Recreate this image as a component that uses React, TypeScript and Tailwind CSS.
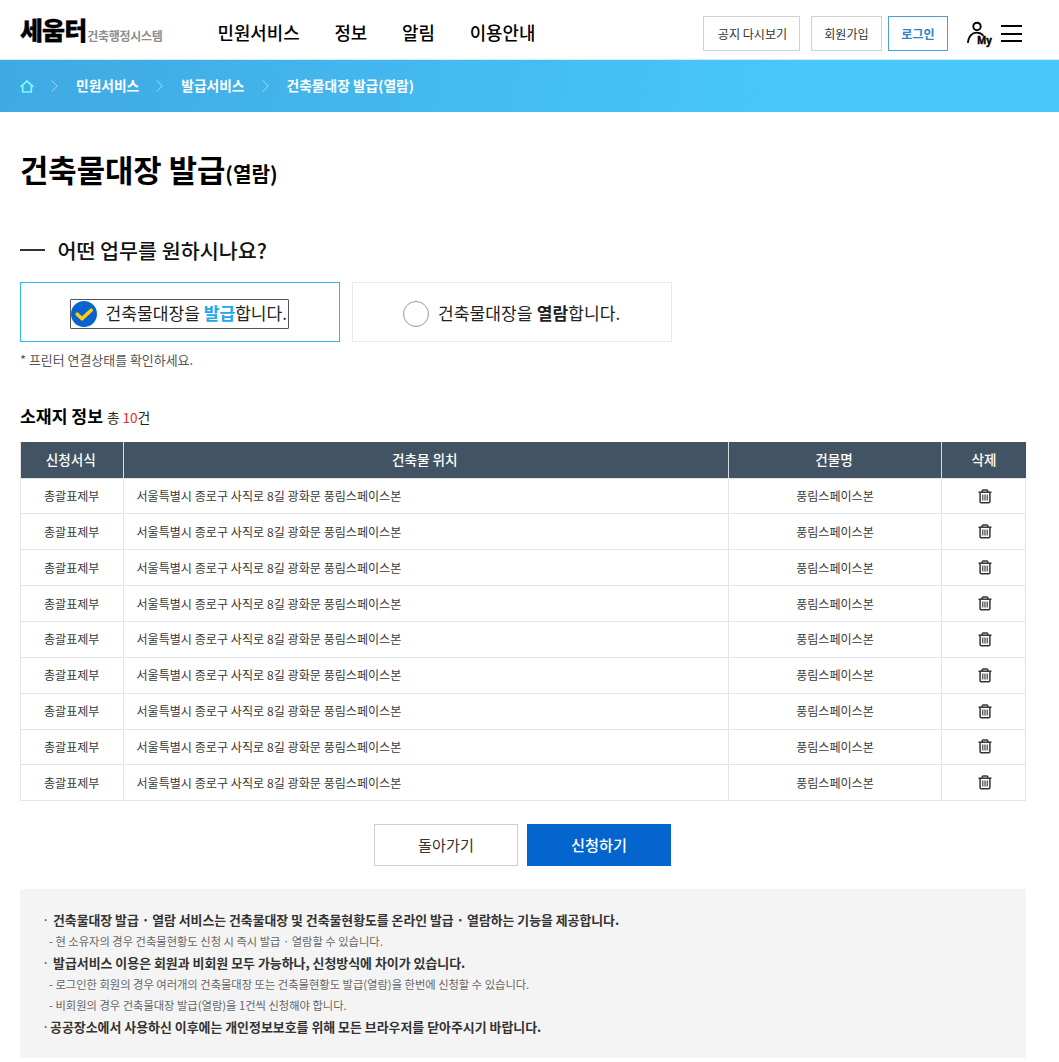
import { Fragment } from 'react';

const menus = ['민원서비스', '정보', '알림', '이용안내'];
const crumbs = ['민원서비스', '발급서비스', '건축물대장 발급(열람)'];

interface Building {
  id: number;
  form: string;
  address: string;
  name: string;
}

const buildings: Building[] = Array.from({ length: 9 }, (_, i) => ({
  id: i + 1,
  form: '총괄표제부',
  address: '서울특별시 종로구 사직로 8길 광화문 풍림스페이스본',
  name: '풍림스페이스본',
}));

function MyIcon() {
  return (
    <svg width="28" height="28" viewBox="0 0 28 28" fill="none" stroke="#000" strokeWidth="1.9">
      <circle cx="11" cy="5.4" r="3.7" />
      <path d="M1.8 21.8C2.3 15.5 6 11.6 10.6 11.6C13.6 11.6 15.9 12.8 17.4 14.6" />
      <text
        x="11"
        y="23.2"
        fontSize="10.5"
        fontWeight="700"
        fill="#000"
        strokeWidth="0.4"
        textLength="15"
        lengthAdjust="spacingAndGlyphs"
        className="font-['Open_Sans',sans-serif]"
      >
        My
      </text>
    </svg>
  );
}

function TrashIcon() {
  return (
    <svg width="14" height="15" viewBox="0 0 14 15" fill="none" stroke="#333" strokeWidth="1.5">
      <path d="M0.5 3.2H13.5" />
      <path d="M4.2 3V1.9Q4.2 0.9 5.2 0.9H8.8Q9.8 0.9 9.8 1.9V3" />
      <path d="M2.1 3.5V12.6Q2.1 13.8 3.3 13.8H10.7Q11.9 13.8 11.9 12.6V3.5" />
      <path d="M4.8 5.5V11.4M7 5.5V11.4M9.2 5.5V11.4" strokeWidth="1.1" />
    </svg>
  );
}

function Header() {
  return (
    <header className="flex h-[60px] items-start border-b border-[#d5ecf7] pl-5">
      <a className="mt-[13px] flex h-[32px] w-[197.5px] shrink-0 items-end whitespace-nowrap">
        <span className="text-[25px] leading-[32px] font-black tracking-[-0.9px] text-black [-webkit-text-stroke:0.3px_#000]">세움터</span>
        <span className="mb-[-1px] ml-[1px] text-[12px] leading-[20px] font-bold tracking-[-0.3px] text-[#8e8e8e]">건축행정시스템</span>
      </a>
      <nav className="mt-[18px] flex gap-[34.8px] text-[17.85px] leading-7 font-medium text-black">
        {menus.map((menu) => (
          <a key={menu}>{menu}</a>
        ))}
      </nav>
      <div className="mt-4 mr-[37px] ml-auto flex text-[12.1px] text-[#333]">
        <button className="h-[35px] w-[97px] border border-[#d2d2d2] pt-[2px] pl-[2px]">공지 다시보기</button>
        <button className="ml-[11px] h-[35px] w-[71px] border border-[#d2d2d2] pt-[2px]">회원가입</button>
        <button className="ml-[6px] h-[35px] w-[60px] border border-[#4a9fd8] pt-[2px] font-bold text-[#2d83c8]">로그인</button>
        <span className="mt-[5px] ml-[18px]">
          <MyIcon />
        </span>
        <span className="mt-[9px] ml-[7px] flex h-[17px] w-[21px] flex-col justify-between">
          <i className="h-[2px] bg-black" />
          <i className="h-[2px] bg-black" />
          <i className="h-[2px] bg-black" />
        </span>
      </div>
    </header>
  );
}

function Breadcrumb() {
  return (
    <div className="flex h-[52px] items-center bg-linear-[100deg,#3fa9e2,#48c7fa_75%] pl-5 text-[13.75px] font-bold text-white">
      <svg width="14" height="13" viewBox="0 0 14 13" fill="none" stroke="#7dfcff" strokeWidth="1.7">
        <path d="M0.6 6.8L7 1L13.4 6.8M2.7 5.8V12H11.3V5.8" />
      </svg>
      {crumbs.map((crumb) => (
        <Fragment key={crumb}>
          <svg className="mr-[18px] ml-[17px]" width="7" height="12" viewBox="0 0 7 12" fill="none" stroke="#a5dcf6">
            <path d="M0.6 0.5L6.3 6L0.6 11.5" />
          </svg>
          <span className="-mt-[2px]">{crumb}</span>
        </Fragment>
      ))}
    </div>
  );
}

function ServiceChoice() {
  return (
    <div className="mt-[15px] flex gap-3 text-[17.1px] text-[#222]">
      <label className="flex h-[60px] w-[320px] items-center border border-[#35b5ea] pt-[4px] pl-[49px]">
        <span className="flex h-[30px] w-[219px] items-center rounded-[1px] border border-[#555] whitespace-nowrap">
          <svg className="mr-[8.5px] shrink-0" width="26" height="26" viewBox="0 0 26 26">
            <circle cx="13" cy="13" r="13" fill="#0764cf" />
            <path
              d="M6.2 13.2L11 17.8L20.2 9.2"
              fill="none"
              stroke="#ffcc12"
              strokeWidth="3.6"
              strokeLinecap="round"
              strokeLinejoin="round"
            />
          </svg>
          <span className="-mt-[2px]">
            건축물대장을 <b className="text-[#19a7ee]">발급</b>합니다.
          </span>
        </span>
      </label>
      <label className="flex h-[60px] w-[320px] items-center border border-[#e8e8e8] pt-[4px] pl-[50px]">
        <span className="mr-[9px] size-[26px] rounded-full border border-[#9a9a9a]" />
        <span className="-mt-[2px] [word-spacing:0.6px]">
          건축물대장을 <b>열람</b>합니다.
        </span>
      </label>
    </div>
  );
}

function BuildingTable() {
  return (
    <table className="mt-[10px] w-[1006px] table-fixed border-separate border-spacing-0 border-l border-[#e5e5e5] text-[12.05px] text-[#3a3a3a]">
      <colgroup>
        <col className="w-[102.5px]" />
        <col className="w-[605.5px]" />
        <col className="w-[213px]" />
        <col className="w-[84px]" />
      </colgroup>
      <thead>
        <tr className="h-[36.6px] bg-[#425363] text-[13.6px] text-white">
          <th className="border-r border-b border-[#d8dcdf] border-b-[#e5e5e5] p-0 pr-[2px] pb-[2px] font-medium">신청서식</th>
          <th className="border-r border-b border-[#d8dcdf] border-b-[#e5e5e5] p-0 pr-[2px] pb-[2px] font-medium">건축물 위치</th>
          <th className="border-r border-b border-[#d8dcdf] border-b-[#e5e5e5] p-0 pr-[2px] pb-[2px] font-medium">건물명</th>
          <th className="border-b border-[#e5e5e5] p-0 pb-[2px] font-medium">삭제</th>
        </tr>
      </thead>
      <tbody>
        {buildings.map((building) => (
          <tr key={building.id} className="h-[35.85px]">
            <td className="border-r border-b border-[#e5e5e5] p-0 text-center">{building.form}</td>
            <td className="border-r border-b border-[#e5e5e5] p-0 pl-[13px] [word-spacing:0.15px]">{building.address}</td>
            <td className="border-r border-b border-[#e5e5e5] p-0 text-center">{building.name}</td>
            <td className="border-r border-b border-[#e5e5e5] p-0">
              <div className="flex justify-center pl-[2px]">
                <TrashIcon />
              </div>
            </td>
          </tr>
        ))}
      </tbody>
    </table>
  );
}

function Notice() {
  return (
    <div className="mt-[23px] h-[169px] w-[1006px] bg-[#f4f4f4] pt-[19px] pl-[22px] whitespace-nowrap text-[#333]">
      <p className="flex h-[22px] items-center text-[12.87px] font-bold">
        <span className="w-[11px] font-normal">·</span>건축물대장 발급 · 열람 서비스는 건축물대장 및 건축물현황도를 온라인 발급 · 열람하는 기능을 제공합니다.
      </p>
      <p className="flex h-[22px] items-center pl-[7px] text-[11.27px] text-[#666]">
        - 현 소유자의 경우 건축물현황도 신청 시 즉시 발급 · 열람할 수 있습니다.
      </p>
      <p className="flex h-[22px] items-center text-[12.93px] font-bold">
        <span className="w-[11px] font-normal">·</span>발급서비스 이용은 회원과 비회원 모두 가능하나, 신청방식에 차이가 있습니다.
      </p>
      <p className="flex h-[21px] items-center pl-[7px] text-[11.28px] text-[#666]">
        - 로그인한 회원의 경우 여러개의 건축물대장 또는 건축물현황도 발급(열람)을 한번에 신청할 수 있습니다.
      </p>
      <p className="flex h-[21px] items-center pl-[7px] text-[11.28px] text-[#666]">
        - 비회원의 경우 건축물대장 발급(열람)을 1건씩 신청해야 합니다.
      </p>
      <p className="flex h-[22px] items-center text-[12.93px] font-bold">
        <span className="w-[8px] font-normal">·</span>공공장소에서 사용하신 이후에는 개인정보보호를 위해 모든 브라우저를 닫아주시기 바랍니다.
      </p>
    </div>
  );
}

export default function App() {
  return (
    <div className="h-[1062px] w-[1059px] overflow-hidden bg-white font-['Noto_Sans_CJK_KR','Noto_Sans',sans-serif]">
      <Header />
      <Breadcrumb />
      <main className="px-5">
        <h1 className="mt-[34px] h-[46px] text-[30.8px] leading-[46px] font-bold text-black">
          건축물대장 발급<span className="text-[20.2px]">(열람)</span>
        </h1>
        <h2 className="mt-[42px] flex h-[32px] items-center text-[20.65px] leading-[32px] font-medium text-[#111]">
          <span className="mr-[12.5px] h-[2px] w-[25px] bg-[#333]" />
          어떤 업무를 원하시나요?
        </h2>
        <div className="h-px" />
        <ServiceChoice />
        <p className="mt-[8px] text-[12.95px] leading-5 text-[#555]">* 프린터 연결상태를 확인하세요.</p>
        <h3 className="mt-[32px] mb-[12px] h-[28px] text-[17.2px] leading-[28px] font-bold text-black">
          소재지 정보
          <span className="ml-1 text-[13.6px] font-normal text-[#222]">
            총 <span className="text-[#f0252f]">10</span>건
          </span>
        </h3>
        <BuildingTable />
        <div className="mt-[23px] flex gap-[9px] pl-[354px] text-[15.2px]">
          <button className="h-[42px] w-[144px] border border-[#cfcfcf] pb-[2px] text-[#333]">돌아가기</button>
          <button className="h-[42px] w-[144px] bg-[#0565cf] pb-[2px] font-medium text-white">신청하기</button>
        </div>
        <Notice />
      </main>
    </div>
  );
}
